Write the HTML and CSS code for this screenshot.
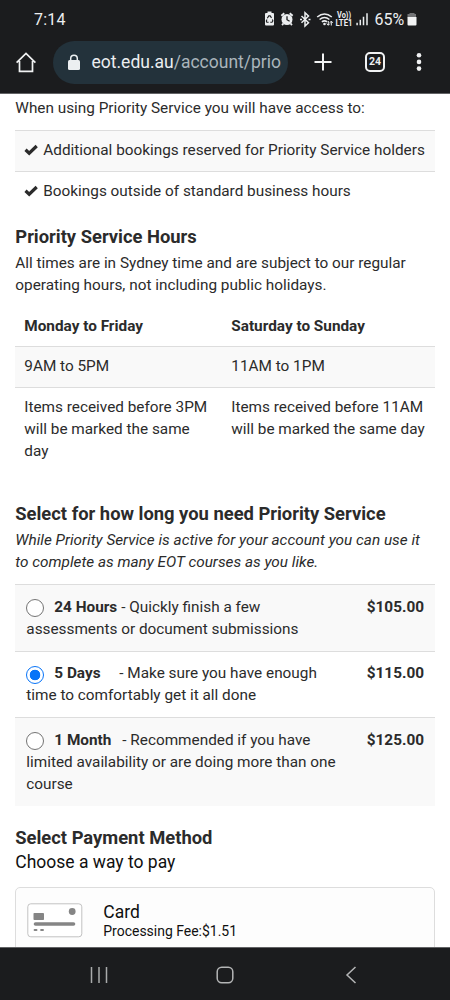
FILE: index.html
```
<!DOCTYPE html>
<html lang="en">
<head>
<meta charset="utf-8">
<title>Priority Service</title>
<link rel="stylesheet" href="styles.css">
</head>
<body>
<div class="phone">
  <header class="chrome">
    <div class="status">
      <span class="time">7:14</span>
      <svg class="status-icons" width="106" height="20" viewBox="0 0 106 20" fill="none">
        <path d="M3 3h1.500V1.500h4V3H10q1 0 1 1v10.500q0 1-1 1H3q-1 0-1-1V4q0-1 1-1z" fill="#eceef0"/>
        <path d="m4.300 8.300 1.500-2.400h1.400l1.300 2M9.400 9.500l.5 1.500-.9 1.300H7.300M5.600 12.300H3.800l-.5-1.300.7-1.500" stroke="#1b1c1e" stroke-width="1.100"/>
        <circle cx="24" cy="9.500" r="5.500" fill="#eceef0"/>
        <path d="M18.300 5.800 21.300 3.300M29.700 5.800 26.700 3.300M20.300 13.500l-1.200 1.600M27.700 13.500l1.200 1.600" stroke="#eceef0" stroke-width="1.800"/>
        <path d="M24 6.200v3.500l2.600 1.500" stroke="#1b1c1e" stroke-width="1.300"/>
        <path d="m38.500 6 7 6.800-3.500 3.200V2.700L45.500 6l-7 6.800M37 9.400h2M45.500 9.400h2" stroke="#eceef0" stroke-width="1.500"/>
        <path d="M54.200 7q7.300-6 14.600 0M56.600 9.500q4.900-4 9.800 0M58.900 11.900q2.600-2.200 5.200 0" stroke="#eceef0" stroke-width="1.600"/>
        <circle cx="61.500" cy="14" r="1.300" fill="#eceef0"/>
        <path d="M65.300 11v4m-1.500-1.400 1.500 1.700 1.500-1.700M68.300 15.500v-4m-1.500 1.300 1.500-1.700 1.500 1.700" stroke="#eceef0" stroke-width="1"/>
        <text x="74" y="7.800" class="volte" textLength="14" lengthAdjust="spacingAndGlyphs">Vo))</text>
        <text x="72.500" y="15.500" class="volte" textLength="17" lengthAdjust="spacingAndGlyphs">LTE1</text>
        <path d="M94.100 12.800v2.500M97.300 9.800v5.500M100.500 6.700v8.600M104 3.300v12" stroke="#eceef0" stroke-width="1.500"/>
      </svg>
      <span class="percent">65%</span>
      <svg class="battery" width="10" height="15" viewBox="0 0 10 15"><path d="M2.500 1h5v1H9v3.500H.5V2h2z" fill="#737476"/><path d="M.5 5h9v7.500q0 1-1 1h-7q-1 0-1-1z" fill="#f2f3f4"/></svg>
    </div>
    <div class="toolbar">
      <svg class="home" width="22" height="22" viewBox="0 0 22 22" fill="none" stroke="#f1f2f3" stroke-width="1.700"><path d="M1.600 11.700 11 2.500l9.400 9.200M4.500 10v10.300h13V10"/></svg>
      <div class="address">
        <svg width="14" height="17" viewBox="0 0 14 17"><path d="M3.700 7V4.600a3.300 3.300 0 0 1 6.600 0V7" fill="none" stroke="#eceff1" stroke-width="1.500"/><rect x="1" y="6" width="12" height="10" rx="1.500" fill="#eceff1"/></svg>
        <span class="url">eot.edu.au<span class="path">/account/prio</span></span>
      </div>
      <svg class="plus" width="18" height="18" viewBox="0 0 18 18"><path d="M9 .5v17M.5 9h17" stroke="#f1f2f3" stroke-width="2"/></svg>
      <span class="tabs">24</span>
      <svg class="more" width="6" height="20" viewBox="0 0 6 20" fill="#f1f2f3"><circle cx="3" cy="3.200" r="2.300"/><circle cx="3" cy="9.900" r="2.300"/><circle cx="3" cy="16.600" r="2.300"/></svg>
    </div>
  </header>
  <main class="page">
    <p class="intro">When using Priority Service you will have access to:</p>
    <ul class="benefits">
      <li><svg width="14" height="12" viewBox="0 0 14 12"><path d="M1.500 5.800 5.200 9.200 12.700 2" fill="none" stroke="#2b2b2b" stroke-width="3.200"/></svg><span>Additional bookings reserved for Priority Service holders</span></li>
      <li><svg width="14" height="12" viewBox="0 0 14 12"><path d="M1.500 5.800 5.200 9.200 12.700 2" fill="none" stroke="#2b2b2b" stroke-width="3.200"/></svg><span>Bookings outside of standard business hours</span></li>
    </ul>
    <h2 class="hours-title">Priority Service Hours</h2>
    <p>All times are in Sydney time and are subject to our regular<br>operating hours, not including public holidays.</p>
    <div class="hours">
      <b>Monday to Friday</b><b>Saturday to Sunday</b>
      <span class="shade">9AM to 5PM</span><span class="shade">11AM to 1PM</span>
      <span>Items received before 3PM<br>will be marked the same<br>day</span><span>Items received before 11AM<br>will be marked the same day</span>
    </div>
    <h2 class="select-title">Select for how long you need Priority Service</h2>
    <p class="note">While Priority Service is active for your account you can use it<br>to complete as many EOT courses as you like.</p>
    <div class="plans">
      <label class="plan shade"><span><i class="radio"></i><b class="name">24 Hours</b>- Quickly finish a few<br>assessments or document submissions</span><b>$105.00</b></label>
      <label class="plan"><span><i class="radio checked"></i><b class="name days">5 Days</b>- Make sure you have enough<br>time to comfortably get it all done</span><b>$115.00</b></label>
      <label class="plan shade"><span><i class="radio"></i><b class="name month">1 Month</b>- Recommended if you have<br>limited availability or are doing more than one<br>course</span><b>$125.00</b></label>
    </div>
    <h2 class="pay-title">Select Payment Method</h2>
    <p class="choose">Choose a way to pay</p>
    <div class="card">
      <svg width="56" height="35" viewBox="0 0 56 35"><rect x=".8" y=".8" width="54" height="33" rx="3" fill="#fff" stroke="#c2c2c2"/><rect x="6.500" y="10" width="10.500" height="7" rx=".8" fill="#858585"/><circle cx="45.200" cy="8.500" r="3.400" fill="#858585"/><path d="M8.500 21h38" stroke="#858585" stroke-width="3.600" stroke-linecap="round"/><path d="M7.700 27h1.700M14.200 27h1.700" stroke="#858585" stroke-width="2.200" stroke-linecap="round"/></svg>
      <div><div class="card-name">Card</div><div class="fee">Processing Fee:$1.51</div></div>
    </div>
  </main>
  <footer class="nav">
    <svg width="18" height="18" viewBox="0 0 18 18"><path d="M1.500 1v16M9 1v16M16.500 1v16" stroke="#a9aaab" stroke-width="1.500"/></svg>
    <svg width="18" height="18" viewBox="0 0 18 18"><rect x="1.200" y="1.200" width="15.600" height="15.600" rx="4.500" fill="none" stroke="#b4b5b6" stroke-width="1.500"/></svg>
    <svg width="18" height="18" viewBox="0 0 18 18"><path d="M13.500 1 5 9l8.500 8" fill="none" stroke="#b4b5b6" stroke-width="1.500"/></svg>
  </footer>
</div>
</body>
</html>
```

FILE: styles.css
```
* { box-sizing: border-box; }
body { margin: 0; font-family: Roboto, sans-serif; background: #fff; }
svg { display: block; flex: none; }
.phone { width: 450px; height: 1000px; display: flex; flex-direction: column; overflow: hidden; }
.chrome { height: 94px; flex: none; background: #1b1c1e; border-bottom: 1px solid #626365; color: #eceef0; }
.status { display: flex; height: 38px; align-items: center; padding-left: 34px; }
.time { width: 228.500px; font-size: 16px; letter-spacing: .2px; }
.status-icons { margin-top: 1px; }
.volte { fill: #eceef0; font: 700 8.500px Roboto, sans-serif; }
.percent { font-size: 16px; width: 31px; margin-left: 6px; white-space: nowrap; }
.battery { margin-left: 1.500px; }
.toolbar { display: flex; align-items: center; height: 48px; padding-left: 15px; }
.address { width: 235px; height: 43px; margin-left: 15.500px; border-radius: 22px; background: #23323b; display: flex; align-items: center; padding: 0 6px 0 14.500px; }
.url { margin-left: 10.500px; font-size: 17.500px; letter-spacing: 0; white-space: nowrap; }
.path { color: #aab5bb; }
.plus { margin-left: 26.500px; }
.tabs { width: 20px; height: 20px; margin-left: 33px; border: 2px solid #f1f2f3; border-radius: 5px; font-size: 10.500px; font-weight: 700; line-height: 16px; text-align: center; }
.more { margin-left: 31px; }
.page { height: 853px; flex: none; padding: 3.500px 15px 0 15.300px; overflow: hidden; font-size: 15.330px; line-height: 21.900px; color: #2b2b2b; white-space: nowrap; }
p, h2, ul { margin: 0; padding: 0; }
h2 { font-size: 18.370px; line-height: 24px; font-weight: 700; }
.intro { margin-bottom: 10.600px; }
.benefits { list-style: none; }
.benefits li { height: 40.500px; border-top: 1px solid #ddd; padding: 1px 9px 0; display: flex; align-items: center; gap: 5px; }
.benefits li svg { margin-bottom: 2px; }
.benefits li:first-child, .shade { background: #f9f9f9; }
.hours-title { margin: 14px 0 3.900px; }
.hours { display: grid; grid-template-columns: 207px 212.700px; margin-top: 9.100px; }
.hours > * { padding: 9.200px 9px 8.400px; border-top: 1px solid #ddd; }
.hours > b { border-top-color: transparent; }
.select-title { margin: 31.400px 0 3.600px; }
.note { font-style: italic; }
.plans { margin-top: 10.400px; }
.plan { display: flex; justify-content: space-between; padding: 11.500px 11px 10.300px; border-top: 1px solid #ddd; }
.radio { display: inline-block; width: 18px; height: 18px; border: 1px solid #747474; border-radius: 50%; background: #fff; vertical-align: -3.500px; margin: -4px 10px -2px 0; }
.checked { border: 1.500px solid #0874f8; background: radial-gradient(circle, #0874f8 0 5px, #fff 5.600px); }
.name { display: inline-block; margin-right: 4px; }
.days { width: 61px; }
.month { width: 64px; }
.pay-title { margin: 20.500px 0 0; }
.choose { font-size: 17.500px; line-height: 24px; color: #101010; }
.card { margin-top: 12.500px; height: 80px; border: 1px solid #ddd; border-radius: 5px; background: #fdfdfd; display: flex; align-items: flex-start; padding: 15px 11px 15px 10.300px; gap: 20.700px; color: #101010; }
.card-name { font-size: 17.500px; line-height: 18px; }
.fee { font-size: 13.980px; line-height: 20px; }
.nav { height: 53px; background: #1b1c1e; border-top: 1px solid #626365; display: flex; justify-content: space-between; align-items: center; padding: 2px 90px 0; }
```
